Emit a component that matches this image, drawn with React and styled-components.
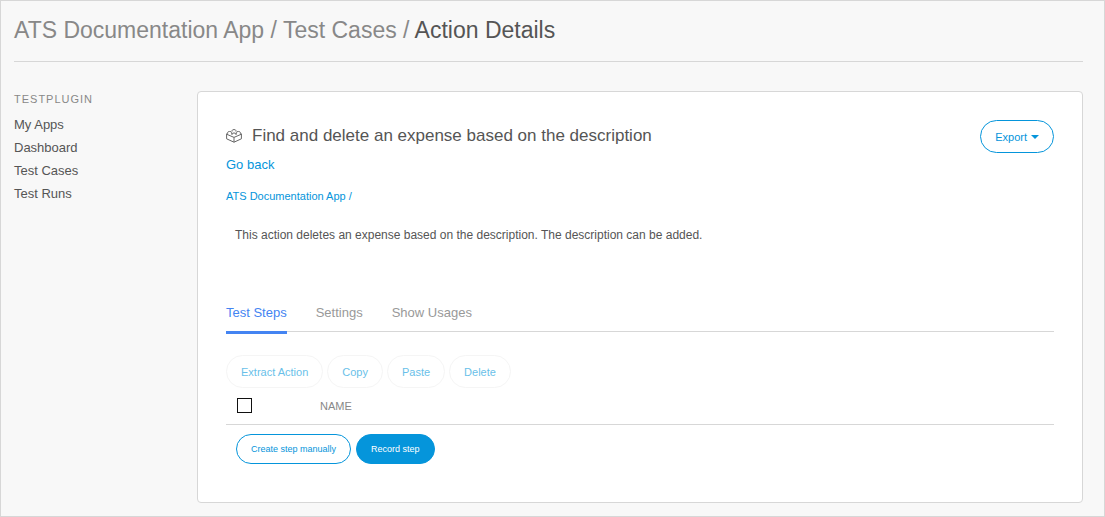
import React from "react";
import styled, { createGlobalStyle } from "styled-components";

const blue = "#0595db";
const line = "#d7d7d7";

const GlobalStyle = createGlobalStyle`
  *, *::before, *::after { box-sizing: border-box; }
  body {
    margin: 0;
    background: #f8f8f8;
    color: #555;
    font-family: Arial, "Liberation Sans", sans-serif;
    font-size: 13px;
  }
  button, input { font-family: inherit; margin: 0; }
  a { text-decoration: none; }
`;

const Page = styled.div`
  min-height: 100vh;
  padding: 0 21px 13px 13px;
  border: 1px solid ${line};
`;

const Header = styled.header`
  padding: 12px 0 14px;
  border-bottom: 1px solid ${line};
`;

const PageTitle = styled.h1`
  margin: 0;
  font-size: 23px;
  font-weight: 400;
  line-height: 34px;
  color: #555;
`;

const TitleLink = styled.a`
  color: #888;
`;

const Body = styled.div`
  display: flex;
  align-items: flex-start;
  padding-top: 29px;
`;

const Sidebar = styled.nav`
  flex: 0 0 183px;
`;

const SidebarHeading = styled.h2`
  margin: 0 0 6px;
  font-size: 11px;
  font-weight: 400;
  line-height: 16px;
  letter-spacing: 1px;
  color: #888;
`;

const NavList = styled.ul`
  margin: 0;
  padding: 0;
  list-style: none;
`;

const NavLink = styled.a`
  display: block;
  line-height: 23px;
  color: #555;
`;

const Card = styled.main`
  flex: 1;
  min-width: 0;
  padding: 28px 28px 38px;
  background: #fff;
  border: 1px solid ${line};
  border-radius: 4px;
`;

const CardHeader = styled.div`
  display: flex;
  align-items: flex-start;
  justify-content: space-between;
`;

const Heading = styled.h2`
  display: flex;
  align-items: center;
  gap: 10px;
  margin: 0;
  font-size: 17px;
  font-weight: 400;
  line-height: 32px;
`;

const TextLink = styled.a`
  color: ${blue};
  font-size: ${({ $small }) => ($small ? 11 : 13)}px;
  line-height: 16px;
`;

const Links = styled.div`
  display: flex;
  flex-direction: column;
  align-items: flex-start;
  gap: 15px;
  padding-top: 4px;
`;

const Description = styled.p`
  margin: 0;
  padding: 23px 9px 0;
  font-size: 12px;
  line-height: 16px;
`;

const Pill = styled.button`
  display: inline-flex;
  align-items: center;
  gap: 4px;
  height: ${({ $small }) => ($small ? 30 : 33)}px;
  padding: 0 14px;
  border: 1px solid ${blue};
  border-radius: 17px;
  background: ${({ $filled }) => ($filled ? blue : "#fff")};
  color: ${({ $filled }) => ($filled ? "#fff" : blue)};
  font-size: ${({ $small }) => ($small ? 9 : 11)}px;
  white-space: nowrap;

  &:disabled {
    border-color: #f5f5f5;
    color: #69bfe9;
  }
`;

const Caret = styled.span`
  border: 4px solid transparent;
  border-top-color: currentColor;
  border-bottom: 0;
`;

const Tabs = styled.div`
  display: flex;
  gap: 29px;
  margin-top: 58px;
  border-bottom: 1px solid ${line};
`;

const Tab = styled.button`
  height: 33px;
  margin-bottom: -3px;
  padding: 0 0 8px;
  border: 0;
  border-bottom: 3px solid ${({ $active }) => ($active ? "#4484f2" : "transparent")};
  background: none;
  color: ${({ $active }) => ($active ? "#4484f2" : "#999")};
  font-size: 13px;
`;

const Actions = styled.div`
  display: flex;
  gap: ${({ $inset }) => ($inset ? 5 : 4)}px;
  padding: ${({ $inset }) => ($inset ? "9px 10px 0" : "23px 0 0")};
`;

const StepTable = styled.table`
  width: 100%;
  border-collapse: collapse;
  border-bottom: 1px solid ${line};

  th {
    height: 36px;
    padding: 0;
    text-align: left;
    font-size: 11px;
    font-weight: 400;
    color: #888;
  }
  th:first-child {
    width: 94px;
    padding-left: 11px;
  }
`;

const Checkbox = styled.input`
  display: block;
  appearance: none;
  width: 15px;
  height: 15px;
  border: 1px solid #111;
  background: #fff;
`;

function BrickIcon() {
  return (
    <svg width="16" height="14" viewBox="0 0 16 14" fill="none" stroke="#666" aria-hidden="true">
      <path d="M.6 4.6v5.2L8 13.2l7.4-3.4V4.6M8 8.4v4.8M.6 5.2L8 8.4l7.4-3.2" />
      <path d="M1.6 4.8V3.6c0-1.5 4-1.5 4 0v1.2M10.4 4.8V3.6c0-1.5 4-1.5 4 0v1.2" />
      <path d="M6 2.6V1.7c0-1.5 4-1.5 4 0v.9M6 6V5.1c0-1.5 4-1.5 4 0V6" />
    </svg>
  );
}

const navItems = ["My Apps", "Dashboard", "Test Cases", "Test Runs"];
const tabs = ["Test Steps", "Settings", "Show Usages"];
const stepActions = ["Extract Action", "Copy", "Paste", "Delete"];

export default function App() {
  return (
    <>
      <GlobalStyle />
      <Page>
        <Header>
          <PageTitle>
            <TitleLink href="#">ATS Documentation App / </TitleLink>
            <TitleLink href="#">Test Cases / </TitleLink>
            Action Details
          </PageTitle>
        </Header>
        <Body>
          <Sidebar>
            <SidebarHeading>TESTPLUGIN</SidebarHeading>
            <NavList>
              {navItems.map((item) => (
                <li key={item}>
                  <NavLink href="#">{item}</NavLink>
                </li>
              ))}
            </NavList>
          </Sidebar>
          <Card>
            <CardHeader>
              <Heading>
                <BrickIcon />
                Find and delete an expense based on the description
              </Heading>
              <Pill type="button">
                Export
                <Caret />
              </Pill>
            </CardHeader>
            <Links>
              <TextLink href="#">Go back</TextLink>
              <TextLink href="#" $small>ATS Documentation App /</TextLink>
            </Links>
            <Description>
              This action deletes an expense based on the description. The description can be added.
            </Description>
            <Tabs role="tablist">
              {tabs.map((tab, i) => (
                <Tab key={tab} type="button" role="tab" aria-selected={i === 0} $active={i === 0}>
                  {tab}
                </Tab>
              ))}
            </Tabs>
            <Actions>
              {stepActions.map((action) => (
                <Pill key={action} type="button" disabled>
                  {action}
                </Pill>
              ))}
            </Actions>
            <StepTable>
              <thead>
                <tr>
                  <th scope="col">
                    <Checkbox type="checkbox" aria-label="Select all steps" />
                  </th>
                  <th scope="col">NAME</th>
                </tr>
              </thead>
            </StepTable>
            <Actions $inset>
              <Pill type="button" $small>Create step manually</Pill>
              <Pill type="button" $small $filled>Record step</Pill>
            </Actions>
          </Card>
        </Body>
      </Page>
    </>
  );
}
